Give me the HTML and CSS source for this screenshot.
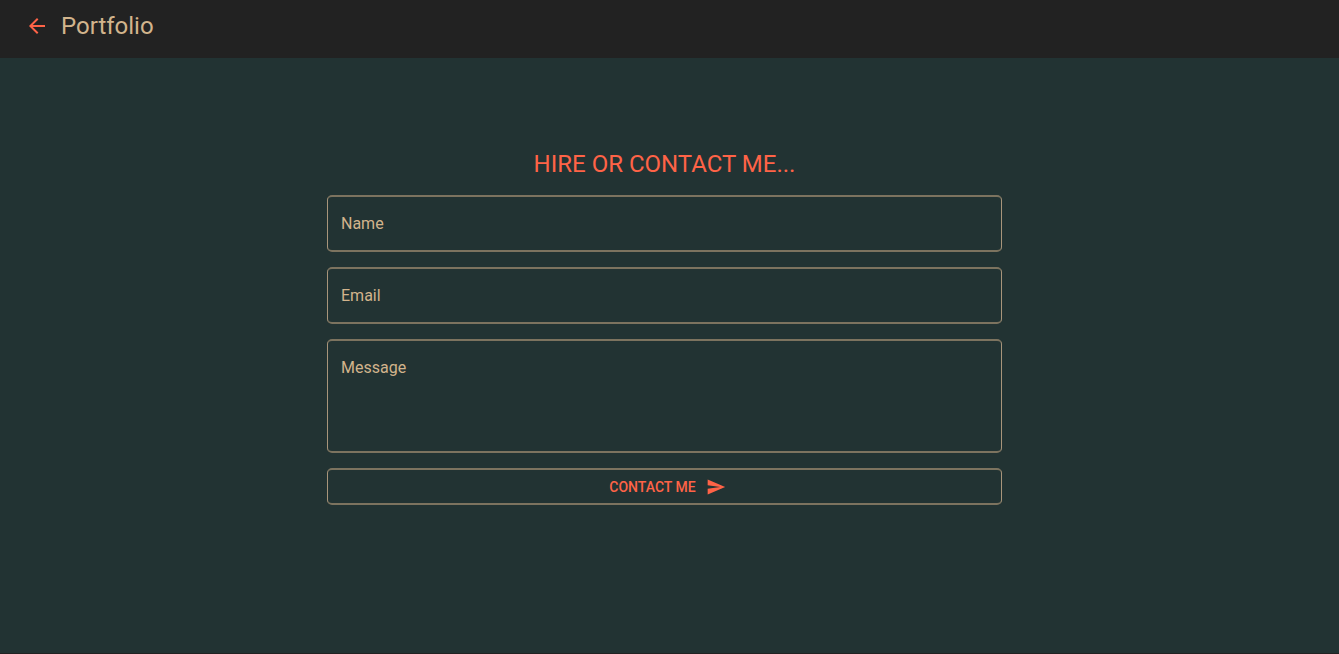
FILE: index.html
```html
<!DOCTYPE html>
<html lang="en">
<head>
<meta charset="utf-8">
<meta name="viewport" content="width=device-width, initial-scale=1">
<title>Portfolio</title>
<link rel="stylesheet" href="styles.css">
</head>
<body>
<header class="app-bar">
  <button class="back" type="button" aria-label="Back">
    <svg viewBox="0 0 24 24" aria-hidden="true"><path d="M20 11H7.83l5.59-5.59L12 4l-8 8 8 8 1.41-1.41L7.83 13H20v-2z"/></svg>
  </button>
  <span class="brand">Portfolio</span>
</header>
<main class="contact">
  <form class="form">
    <h1 class="title">Hire or contact me...</h1>
    <div class="field">
      <input class="control" id="name" type="text" placeholder=" ">
      <label class="label" for="name">Name</label>
    </div>
    <div class="field">
      <input class="control" id="email" type="email" placeholder=" ">
      <label class="label" for="email">Email</label>
    </div>
    <div class="field">
      <textarea class="control" id="message" rows="4" placeholder=" "></textarea>
      <label class="label" for="message">Message</label>
    </div>
    <button class="submit" type="submit">
      Contact me
      <svg viewBox="0 0 24 24" aria-hidden="true"><path d="M2.01 21L23 12 2.01 3 2 10l15 2-15 2z"/></svg>
    </button>
  </form>
</main>
</body>
</html>
```
FILE: styles.css
```css
* { box-sizing: border-box; }

body {
  margin: 0;
  min-height: 100vh;
  display: flex;
  flex-direction: column;
  background: #223333;
  border-bottom: 1px solid #222;
  color: tan;
  font-family: Roboto, sans-serif;
}

.app-bar {
  display: flex;
  align-items: center;
  gap: 12px;
  height: 58px;
  padding: 0 25px 6px;
  background: #222;
}

.back {
  display: flex;
  padding: 0;
  border: 0;
  background: none;
  color: tomato;
  cursor: pointer;
}

.back svg {
  width: 24px;
  height: 24px;
  fill: currentColor;
}

.brand {
  font-size: 24px;
  line-height: 32px;
}

.contact {
  display: flex;
  justify-content: center;
  padding: 90px 10px 24px 0;
}

.form {
  display: flex;
  flex-direction: column;
  gap: 15px;
  width: 100%;
  max-width: 675px;
}

.title {
  margin: 0;
  color: tomato;
  font-size: 24px;
  font-weight: 400;
  line-height: 32px;
  text-align: center;
  text-transform: uppercase;
}

.field {
  position: relative;
  display: flex;
}

.control,
.submit {
  width: 100%;
  border: solid #7c735f;
  border-width: 2px 1px;
  border-left-color: #a8957b;
  border-right-color: #a8957b;
  border-radius: 5px;
  background: none;
  font-family: inherit;
}

.control {
  padding: 17px 13px;
  color: tan;
  font-size: 16px;
  line-height: 19px;
  outline: none;
  resize: none;
}

.label {
  position: absolute;
  top: 19px;
  left: 14px;
  font-size: 16px;
  line-height: 19px;
  pointer-events: none;
}

.control:focus { border-color: tomato; }

.control:not(:placeholder-shown) + .label { display: none; }

.submit {
  display: flex;
  align-items: center;
  justify-content: center;
  gap: 10px;
  height: 37px;
  padding: 0 2px 0 8px;
  color: tomato;
  font-size: 14px;
  font-weight: 500;
  line-height: 24px;
  text-transform: uppercase;
  cursor: pointer;
}

.submit svg {
  width: 20px;
  height: 20px;
  fill: currentColor;
}
```
